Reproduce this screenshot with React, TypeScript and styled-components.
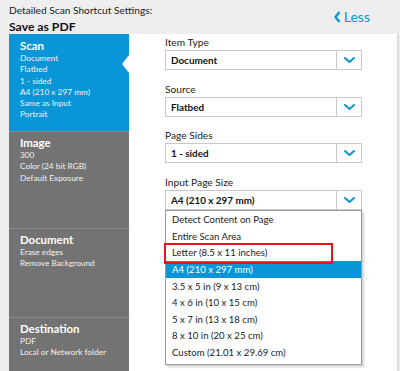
import React from "react";
import styled, {createGlobalStyle} from "styled-components";

const GlobalStyle = createGlobalStyle`
  html, body {
    margin: 0;
    padding: 0;
    background: #ffffff;
  }
  body {
    font-family: Lato, "Open Sans", sans-serif;
  }
`

const blue = "#0a96d6"

const Page = styled.div`
  width: 400px;
  height: 371px;
  overflow: hidden;
  display: flex;
  flex-direction: column;
  background: #eeeeee;
`

const Header = styled.div`
  height: 34px;
  flex-shrink: 0;
  display: flex;
  align-items: flex-start;
  justify-content: space-between;
  padding: 4px 30px 0 9px;
  box-sizing: border-box;
`

const TitleBlock = styled.div`
  display: flex;
  flex-direction: column;
  gap: 2px;
  color: #222;
`

const SubTitle = styled.div`
  font-size: 10.2px;
  line-height: 13px;
`

const Title = styled.div`
  font-size: 12.2px;
  line-height: 15px;
  font-weight: 700;
  color: #111;
`

const LessLink = styled.a`
  display: flex;
  align-items: center;
  gap: 3px;
  color: ${blue};
  font-size: 14px;
  line-height: 16px;
  text-decoration: none;
  margin-top: 5px;
`

const Body = styled.div`
  flex: 1;
  display: flex;
  padding-left: 9px;
`

const Sidebar = styled.div`
  width: 120px;
  display: flex;
  flex-direction: column;
  background: #737373;
`

const Section = styled.div<{ active?: boolean, h: number }>`
  position: relative;
  height: ${p => p.h}px;
  flex-shrink: 0;
  box-sizing: border-box;
  padding: 3px 0 0 11px;
  background: ${p => p.active ? blue : "#737373"};
  border-top: 1px solid ${p => p.active ? blue : "#8e8e8e"};
  color: #ffffff;
`

const SectionTitle = styled.div`
  font-size: 11.4px;
  line-height: 15px;
  font-weight: 700;
`

const SectionItem = styled.div`
  font-size: 8.3px;
  line-height: 11.3px;
  color: #f2f2f2;
`

const Notch = styled.div`
  position: absolute;
  right: 0;
  top: 20px;
  width: 0;
  height: 0;
  border-top: 9px solid transparent;
  border-bottom: 9px solid transparent;
  border-right: 7px solid #ffffff;
`

const Content = styled.div`
  flex: 1;
  background: #ffffff;
  padding: 1px 0 0 36px;
  border-right: 2px solid #dcdcdc;
  margin-right: 1px;
`

const Field = styled.div`
  position: relative;
  width: 197px;
  margin-bottom: 11.5px;
`

const Label = styled.div`
  font-size: 10.2px;
  line-height: 14px;
  color: #222;
  margin-bottom: 1px;
`

const SelectBox = styled.div`
  height: 20px;
  box-sizing: border-box;
  border: 1px solid #c9c9c9;
  display: flex;
  align-items: stretch;
  background: #fff;
`

const SelectValue = styled.div`
  flex: 1;
  display: flex;
  align-items: center;
  padding-left: 5px;
  font-size: 9.9px;
  font-weight: 700;
  color: #111;
`

const SelectButton = styled.div`
  width: 24px;
  border-left: 1px solid #c9c9c9;
  display: flex;
  align-items: center;
  justify-content: center;
`

const List = styled.div`
  position: absolute;
  left: 0;
  top: 35px;
  width: 197px;
  box-sizing: border-box;
  border: 1px solid #9a9a9a;
  background: #fff;
  box-shadow: 2px 2px 2px rgba(0, 0, 0, 0.18);
  padding: 1px 0 3px;
  z-index: 2;
`

const Option = styled.div<{ selected?: boolean }>`
  height: 16.6px;
  display: flex;
  align-items: center;
  padding-left: 6px;
  font-size: 9.6px;
  color: ${p => p.selected ? "#ffffff" : "#222"};
  background: ${p => p.selected ? blue : "transparent"};
`

const Highlight = styled.div`
  position: absolute;
  left: -2px;
  top: 32px;
  width: 169px;
  height: 21px;
  box-sizing: border-box;
  border: 2px solid #e8141c;
  pointer-events: none;
`

const Chevron = () => (
    <svg width="11" height="6" viewBox="0 0 11 6">
        <polyline points="1,1 5.5,5 10,1" fill="none" stroke={blue} strokeWidth="2" strokeLinecap="round"
                  strokeLinejoin="round"/>
    </svg>
)

const BackChevron = () => (
    <svg width="7" height="12" viewBox="0 0 7 12">
        <polyline points="5.5,1 1.5,6 5.5,11" fill="none" stroke={blue} strokeWidth="2.4"/>
    </svg>
)

const Select = ({value}: { value: string }) => (
    <SelectBox>
        <SelectValue>{value}</SelectValue>
        <SelectButton><Chevron/></SelectButton>
    </SelectBox>
)

const sizes = [
    "Detect Content on Page",
    "Entire Scan Area",
    "Letter (8.5 x 11 inches)",
    "A4 (210 x 297 mm)",
    "3.5 x 5 in (9 x 13 cm)",
    "4 x 6 in (10 x 15 cm)",
    "5 x 7 in (13 x 18 cm)",
    "8 x 10 in (20 x 25 cm)",
    "Custom (21.01 x 29.69 cm)"
]

export default function App() {
    return (
        <>
            <GlobalStyle/>
            <Page>
                <Header>
                    <TitleBlock>
                        <SubTitle>Detailed Scan Shortcut Settings:</SubTitle>
                        <Title>Save as PDF</Title>
                    </TitleBlock>
                    <LessLink href="#"><BackChevron/>Less</LessLink>
                </Header>
                <Body>
                    <Sidebar>
                        <Section active h={97}>
                            <SectionTitle>Scan</SectionTitle>
                            <SectionItem>Document</SectionItem>
                            <SectionItem>Flatbed</SectionItem>
                            <SectionItem>1 - sided</SectionItem>
                            <SectionItem>A4 (210 x 297 mm)</SectionItem>
                            <SectionItem>Same as Input</SectionItem>
                            <SectionItem>Portrait</SectionItem>
                            <Notch/>
                        </Section>
                        <Section h={97}>
                            <SectionTitle>Image</SectionTitle>
                            <SectionItem>300</SectionItem>
                            <SectionItem>Color (24 bit RGB)</SectionItem>
                            <SectionItem>Default Exposure</SectionItem>
                        </Section>
                        <Section h={89}>
                            <SectionTitle>Document</SectionTitle>
                            <SectionItem>Erase edges</SectionItem>
                            <SectionItem>Remove Background</SectionItem>
                        </Section>
                        <Section h={60}>
                            <SectionTitle>Destination</SectionTitle>
                            <SectionItem>PDF</SectionItem>
                            <SectionItem>Local or Network folder</SectionItem>
                        </Section>
                    </Sidebar>
                    <Content>
                        <Field>
                            <Label>Item Type</Label>
                            <Select value="Document"/>
                        </Field>
                        <Field>
                            <Label>Source</Label>
                            <Select value="Flatbed"/>
                        </Field>
                        <Field>
                            <Label>Page Sides</Label>
                            <Select value="1 - sided"/>
                        </Field>
                        <Field>
                            <Label>Input Page Size</Label>
                            <Select value="A4 (210 x 297 mm)"/>
                            <List>
                                {sizes.map(s => (
                                    <Option key={s} selected={s.startsWith("A4")}>{s}</Option>
                                ))}
                                <Highlight/>
                            </List>
                        </Field>
                    </Content>
                </Body>
            </Page>
        </>
    )
}
